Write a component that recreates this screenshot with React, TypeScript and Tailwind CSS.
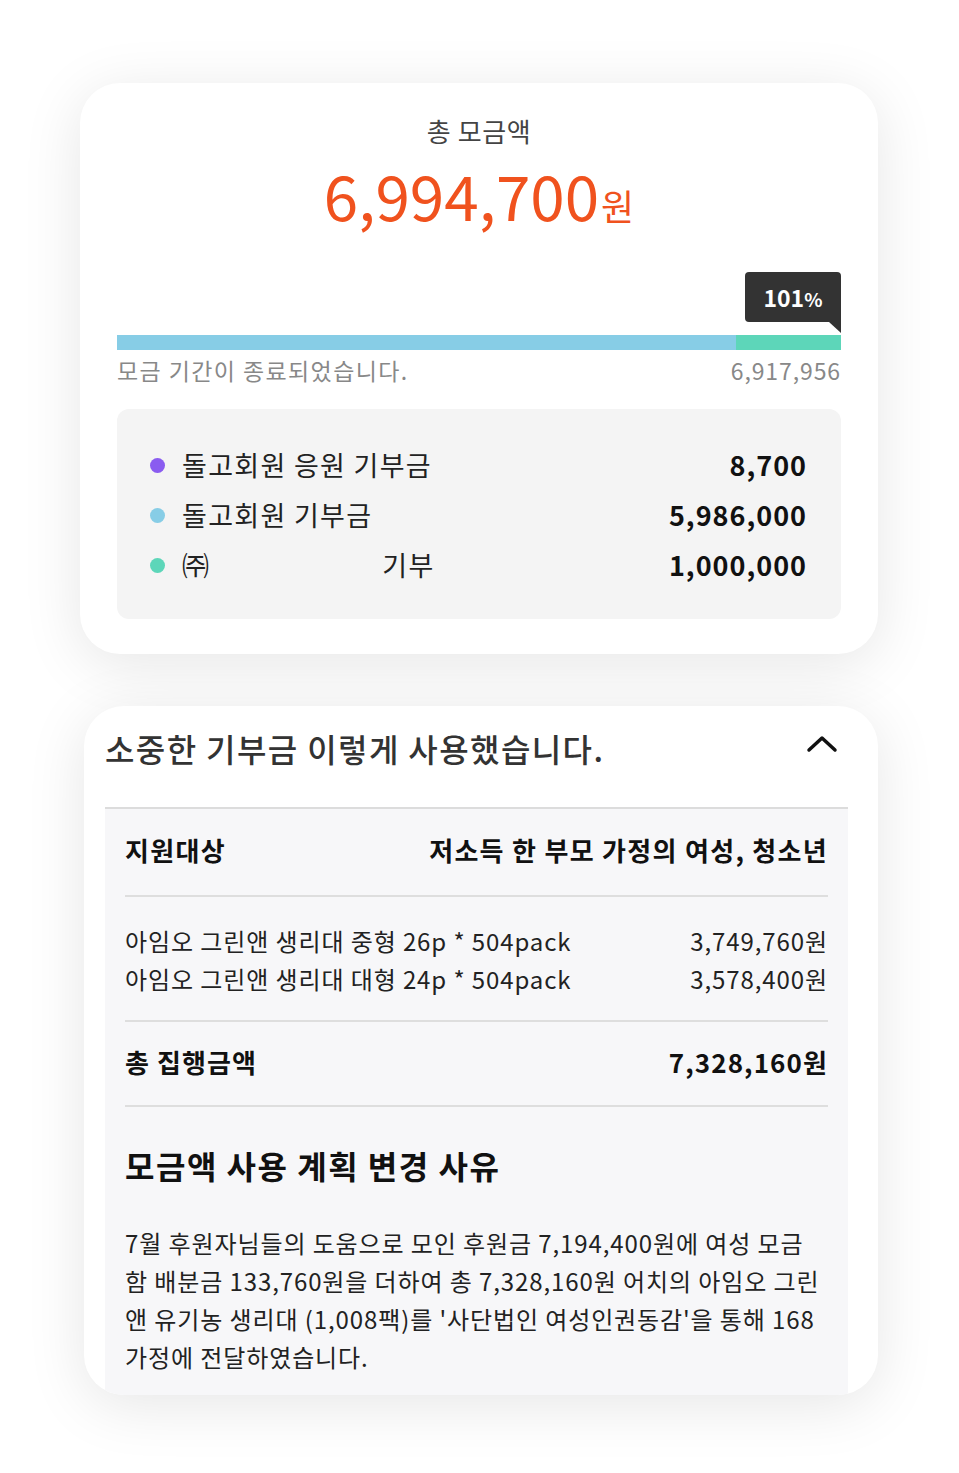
import React from "react";

const font = { fontFamily: '"Noto Sans CJK KR", "Noto Sans", sans-serif' };

function Row({ dot, label, value }: { dot: string; label: React.ReactNode; value: string }) {
  return (
    <div className="flex items-center justify-between h-[50px]">
      <div className="flex items-center">
        <span className={`w-[15px] h-[15px] rounded-full ${dot}`} />
        <span className="ml-[17px] text-[27px] text-[#222] tracking-[1.3px]">{label}</span>
      </div>
      <span className="text-[27px] font-bold text-[#111] tracking-[1px]">{value}</span>
    </div>
  );
}

export default function App() {
  return (
    <div className="min-h-[1473px] w-[959px] bg-white pt-[83px] pb-[78px]" style={font}>
      {/* Card 1 */}
      <div className="ml-[80px] w-[798px] rounded-[40px] bg-white px-[37px] pt-[32px] pb-[35px] shadow-[0_10px_60px_rgba(0,0,0,0.1)]">
        <div className="text-center text-[26px] leading-[32px] tracking-[0.6px] text-[#444]">총 모금액</div>
        <div className="mt-[11px] flex items-baseline justify-center leading-[72px] text-[#f0521e]">
          <span className="text-[62px]">6,994,700</span>
          <span className="text-[36px] ml-[2px]">원</span>
        </div>
        <div className="mt-[31px] flex justify-end">
          <div className="relative flex h-[50px] w-[96px] items-center justify-center rounded-t-[4px] rounded-bl-[4px] bg-[#333]">
            <span className="text-[23px] font-bold text-white">
              101<span className="text-[19px]">%</span>
            </span>
            <svg className="absolute right-0 top-[50px]" width="12" height="11" viewBox="0 0 12 11">
              <polygon points="0,0 12,0 12,11" fill="#333" />
            </svg>
          </div>
        </div>
        <div className="mt-[13px] flex h-[15px] w-full">
          <div className="h-full w-[619px] bg-[#87cde6]" />
          <div className="h-full flex-1 bg-[#5dd6b9]" />
        </div>
        <div className="mt-[5px] flex items-center justify-between text-[23px] leading-[30px] text-[#888]">
          <span className="tracking-[1.4px]">모금 기간이 종료되었습니다.</span>
          <span className="tracking-[0.9px]">6,917,956</span>
        </div>
        <div className="mt-[24px] rounded-[12px] bg-[#f4f4f4] pl-[33px] pr-[34px] pt-[31px] pb-[29px]">
          <Row dot="bg-[#8a5cf0]" label="돌고회원 응원 기부금" value="8,700" />
          <Row dot="bg-[#87cde6]" label="돌고회원 기부금" value="5,986,000" />
          <Row
            dot="bg-[#5dd6b9]"
            label={
              <span className="flex items-center">
                <span>㈜</span>
                <span className="inline-block w-[172px]" />
                <span>기부</span>
              </span>
            }
            value="1,000,000"
          />
        </div>
      </div>

      {/* Card 2 */}
      <div className="ml-[84px] mt-[52px] w-[794px] overflow-hidden rounded-[40px] bg-white pl-[21px] pr-[30px] shadow-[0_10px_60px_rgba(0,0,0,0.1)]">
        <div className="flex h-[101px] items-start justify-between pt-[20px]">
          <h2 className="text-[32px] font-medium leading-[44px] tracking-[1.4px] text-[#333]">
            소중한 기부금 이렇게 사용했습니다.
          </h2>
          <svg className="mt-[8px] mr-[10px]" width="32" height="20" viewBox="0 0 32 20">
            <polyline points="3,16 16,4 29,16" fill="none" stroke="#111" strokeWidth="3.5" strokeLinecap="round" strokeLinejoin="round" />
          </svg>
        </div>
        <div className="h-[2px] bg-[#dcdcdc]" />
        <div className="bg-[#f7f7f9] px-[20px] pb-[19px]">
          <div className="flex items-center justify-between pt-[23px] pb-[27px] text-[26px] font-bold leading-[36px] text-[#111] tracking-[1.3px]">
            <span>지원대상</span>
            <span>저소득 한 부모 가정의 여성, 청소년</span>
          </div>
          <div className="h-[2px] bg-[#dedede]" />
          <div className="pt-[25px] pb-[22px] text-[24px] leading-[38px] text-[#222] tracking-[0.9px]">
            <div className="flex justify-between">
              <span>아임오 그린앤 생리대 중형 26p * 504pack</span>
              <span>3,749,760원</span>
            </div>
            <div className="flex justify-between">
              <span>아임오 그린앤 생리대 대형 24p * 504pack</span>
              <span>3,578,400원</span>
            </div>
          </div>
          <div className="h-[2px] bg-[#dedede]" />
          <div className="flex items-center justify-between pt-[22px] pb-[25px] text-[26px] font-bold leading-[36px] text-[#111] tracking-[1.1px]">
            <span>총 집행금액</span>
            <span>7,328,160원</span>
          </div>
          <div className="h-[2px] bg-[#dedede]" />
          <h3 className="mt-[36px] text-[32px] font-bold leading-[44px] text-[#111] tracking-[1.5px]">
            모금액 사용 계획 변경 사유
          </h3>
          <p className="mt-[37px] text-[24px] leading-[38px] text-[#222] tracking-[0.9px]">
            7월 후원자님들의 도움으로 모인 후원금 7,194,400원에 여성 모금
            <br />
            함 배분금 133,760원을 더하여 총 7,328,160원 어치의 아임오 그린
            <br />
            앤 유기농 생리대 (1,008팩)를 '사단법인 여성인권동감'을 통해 168
            <br />
            가정에 전달하였습니다.
          </p>
        </div>
      </div>
    </div>
  );
}
